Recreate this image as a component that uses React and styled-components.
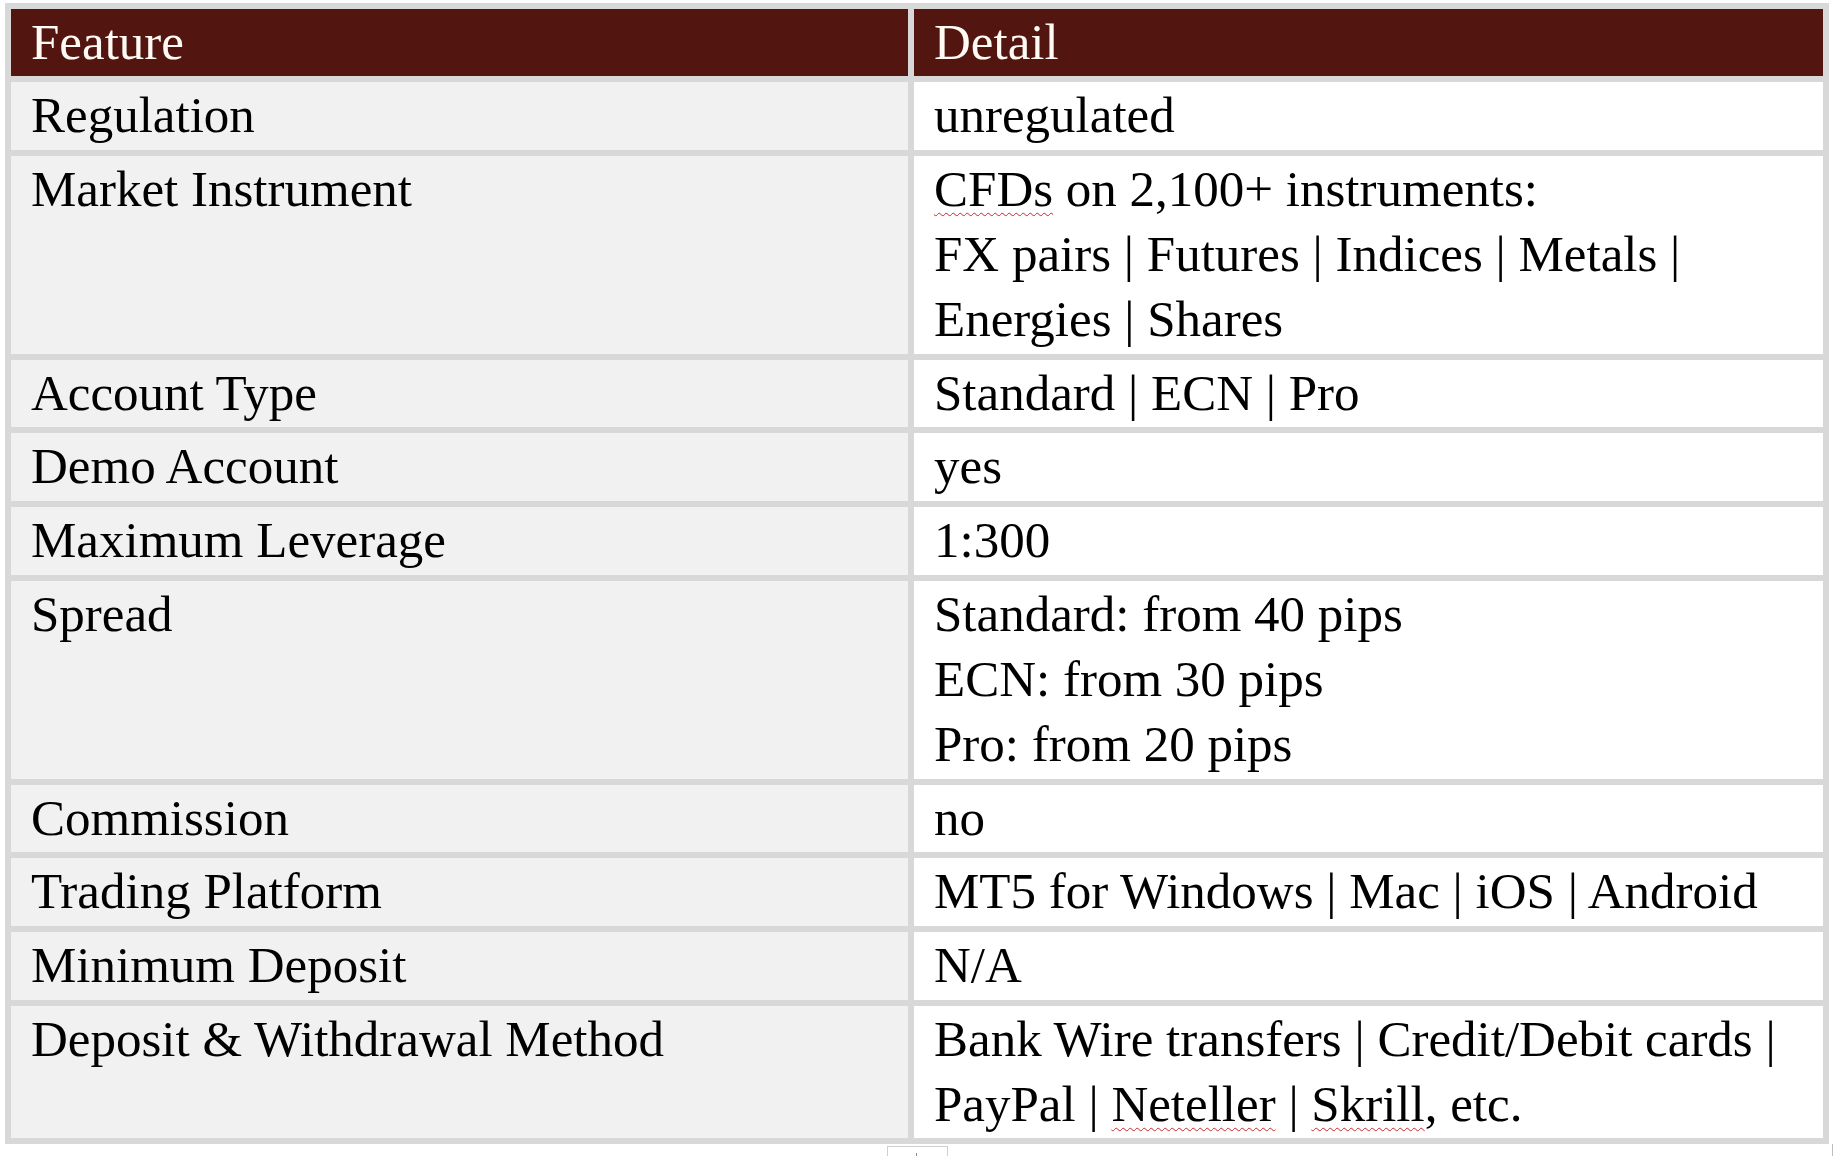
import React from 'react'
import styled, { createGlobalStyle } from 'styled-components'

const GlobalStyle = createGlobalStyle`
  html, body {
    margin: 0;
    padding: 0;
    background: #ffffff;
  }
  body {
    font-family: "Liberation Serif", "Times New Roman", serif;
  }
`

const rows = [
  { feature: 'Regulation', detail: ['unregulated'] },
  {
    feature: 'Market Instrument',
    detail: [
      <><Spell>CFDs</Spell> on 2,100+ instruments:</>,
      'FX pairs | Futures | Indices | Metals |',
      'Energies | Shares',
    ],
  },
  { feature: 'Account Type', detail: ['Standard | ECN | Pro'] },
  { feature: 'Demo Account', detail: ['yes'] },
  { feature: 'Maximum Leverage', detail: ['1:300'] },
  {
    feature: 'Spread',
    detail: ['Standard: from 40 pips', 'ECN: from 30 pips', 'Pro: from 20 pips'],
  },
  { feature: 'Commission', detail: ['no'] },
  { feature: 'Trading Platform', detail: ['MT5 for Windows | Mac | iOS | Android'] },
  { feature: 'Minimum Deposit', detail: ['N/A'] },
  {
    feature: 'Deposit & Withdrawal Method',
    detail: [
      'Bank Wire transfers | Credit/Debit cards |',
      <>PayPal | <Spell>Neteller</Spell> | <Spell>Skrill</Spell>, etc.</>,
    ],
  },
]

function App() {
  return (
    <>
      <GlobalStyle />
      <Page>
        <Table>
          <HeadCell>Feature</HeadCell>
          <HeadCell>Detail</HeadCell>
          {rows.map(row => (
            <React.Fragment key={row.feature}>
              <Cell shade>{row.feature}</Cell>
              <Cell>
                {row.detail.map((line, i) => (
                  <Line key={i}>{line}</Line>
                ))}
              </Cell>
            </React.Fragment>
          ))}
        </Table>
        <Handles>
          <RowHandle>
            <Tick />
          </RowHandle>
          <EdgeMark />
        </Handles>
      </Page>
    </>
  )
}

function Spell({ children }) {
  return <Squiggle>{children}</Squiggle>
}

const Page = styled.div`
  padding: 3px 0 0 5px;
  width: 1829px;
`

const Table = styled.div`
  display: grid;
  grid-template-columns: 897px 909px;
  gap: 6px;
  padding: 6px;
  width: 1824px;
  box-sizing: border-box;
  background: #d8d8d8;
`

const HeadCell = styled.div`
  background: #52150f;
  color: #fffaf4;
  font-size: 51px;
  line-height: 65px;
  padding: 1px 20px;
`

const Cell = styled.div`
  background: ${p => (p.shade ? '#f1f1f1' : '#ffffff')};
  color: #000000;
  font-size: 51px;
  line-height: 65.3px;
  padding: 1px 20px 1.3px;
`

const Line = styled.div`
  white-space: nowrap;
`

const Squiggle = styled.span`
  text-decoration: underline wavy #c8282a;
  text-decoration-thickness: 1px;
  text-underline-offset: 6px;
`

const Handles = styled.div`
  position: relative;
  height: 13px;
`

const RowHandle = styled.div`
  position: absolute;
  left: 882px;
  top: 2px;
  width: 59px;
  height: 20px;
  border: 1px solid #cfcfcf;
  border-bottom: none;
  background: #ffffff;
`

const Tick = styled.div`
  position: absolute;
  left: 28px;
  top: 6px;
  width: 1px;
  height: 8px;
  background: #8a8a8a;
`

const EdgeMark = styled.div`
  position: absolute;
  left: 1827px;
  top: 0;
  width: 1px;
  height: 13px;
  background: #bdbdbd;
`

export default App
